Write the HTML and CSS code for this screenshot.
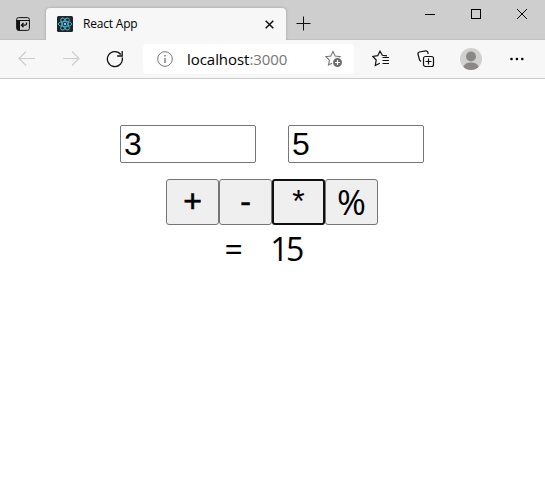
FILE: index.html
```html
<!DOCTYPE html>
<html lang="en">
<head>
<meta charset="utf-8">
<title>React App</title>
<link rel="stylesheet" href="styles.css">
</head>
<body>
<header class="tabstrip">
  <svg class="tab-actions" width="14" height="14" viewBox="0 0 14 14" fill="none" stroke="#111"><rect x=".6" y=".6" width="12.8" height="12.8" rx="2"/><path d="M.6 3.5h12.8"/><path d="M1 3.5h3v10H2L1 12z" fill="#111" stroke="none"/><path d="M10.500 5.500v1.200q0 1.500-1.500 1.500H5.500M7.500 6L5.500 8.200l2 2" stroke-width="1.300"/></svg>
  <div class="tab">
    <svg class="favicon" width="16" height="16" viewBox="0 0 16 16" fill="none" stroke="#4fb3ce" stroke-width=".9"><rect width="16" height="16" rx="1.500" fill="#20232a" stroke="none"/><ellipse cx="8" cy="8" rx="6.700" ry="2.600"/><ellipse cx="8" cy="8" rx="6.700" ry="2.600" transform="rotate(60 8 8)"/><ellipse cx="8" cy="8" rx="6.700" ry="2.600" transform="rotate(120 8 8)"/><circle cx="8" cy="8" r="1.200" fill="#61dafb" stroke="none"/></svg>
    <span class="tab-title">React App</span>
    <svg class="tab-close" width="9" height="9" viewBox="0 0 9 9" stroke="#111" stroke-width="1.500"><path d="M.7.7l7.600 7.600M8.300.7L.7 8.300"/></svg>
  </div>
  <svg class="new-tab" width="15" height="15" viewBox="0 0 15 15" stroke="#111"><path d="M7.500.5v14M.5 7.500h14"/></svg>
  <div class="window-controls">
    <svg width="12" height="12" viewBox="0 0 12 12" stroke="#000"><path d="M1 6.500h10"/></svg>
    <svg width="12" height="12" viewBox="0 0 12 12" fill="none" stroke="#000"><rect x="1.500" y="1.500" width="9" height="9"/></svg>
    <svg width="12" height="12" viewBox="0 0 12 12" stroke="#000"><path d="M1 1l10 10M11 1L1 11"/></svg>
  </div>
</header>
<nav class="toolbar">
  <svg class="back" width="18" height="16" viewBox="0 0 18 16" fill="none" stroke="#ccc" stroke-width="1.100"><path d="M17 7.500H1.500M8 .5l-7 7 7 7"/></svg>
  <svg class="forward" width="18" height="16" viewBox="0 0 18 16" fill="none" stroke="#ccc" stroke-width="1.100"><path d="M1 7.500h15.500M10 .5l7 7-7 7"/></svg>
  <svg class="reload" width="18" height="18" viewBox="0 0 18 18" fill="none" stroke="#111" stroke-width="1.300"><path d="M16.200 7.500A7.500 7.500 0 1 1 14.800 4.500M16.200 1v5h-5"/></svg>
  <div class="address">
    <svg class="info" width="16" height="16" viewBox="0 0 16 16" fill="none" stroke="#777"><circle cx="8" cy="8" r="7.300"/><path d="M8 7v5M8 4v1.500" stroke-width="1.400"/></svg>
    <span class="url">localhost<span class="port">:3000</span></span>
    <svg class="star" width="18" height="18" viewBox="0 0 18 18" fill="none" stroke="#777" stroke-width="1.100"><path d="M8 1.500l2.100 4.600 5 .6-3.700 3.400 1 5L8 12.700l-4.500 2.400.9-5L.8 6.700l5-.6z"/><circle cx="12.500" cy="12.500" r="5" fill="#6c6c6c" stroke="#fff"/><path d="M10 12.500h5M12.500 10v5" stroke="#fff" stroke-width="1.200"/></svg>
  </div>
  <svg class="favorites" width="18" height="18" viewBox="0 0 18 18" fill="none" stroke="#111" stroke-width="1.200"><path d="M15 5.800l-4.700-.5L8 1.200 5.700 5.700l-4.900.8L4.200 10l-.9 5.500 4.500-2.300M10.500 7.500h6.500M10.500 10.500h6.500M10.500 13.500h6.500"/></svg>
  <svg class="collections" width="18" height="18" viewBox="0 0 18 18" fill="none" stroke="#111" stroke-width="1.200"><path d="M4 11.500L2.500 10 1 4Q.7 2.500 2.300 2L8.700.8Q10.200.6 10.700 2l.5 2"/><rect x="6.500" y="6.500" width="10" height="10" rx="2" fill="#f7f7f7"/><path d="M8.500 11.500h6M11.500 8.500v6"/></svg>
  <svg class="profile" width="22" height="22" viewBox="0 0 22 22"><circle cx="11" cy="11" r="11" fill="#d2d0ce"/><circle cx="11" cy="8.500" r="5" fill="#8a8886"/><path d="M3.300 18.800Q5 14.500 11 14.500t7.700 4.300Q15.500 22 11 22t-7.700-3.200z" fill="#8a8886"/></svg>
  <svg class="more" width="14" height="4" viewBox="0 0 14 4" fill="#000"><circle cx="1.500" cy="2" r="1.300"/><circle cx="6.900" cy="2" r="1.300"/><circle cx="12.300" cy="2" r="1.300"/></svg>
</nav>
<main class="app">
  <div class="inputs"><input value="3" aria-label="First number"><input value="5" aria-label="Second number"></div>
  <div class="operators">
    <button class="heavy">+</button><button class="heavy">-</button><button class="active">*</button><button class="percent">%</button>
  </div>
  <div class="result"><span class="equals">=</span><span class="value">15</span></div>
</main>
</body>
</html>
```
FILE: styles.css
```css
* { box-sizing: border-box; }
html, body { height: 100%; }
body { margin: 0; overflow: hidden; background: #fff; color: #000; font-family: "Open Sans", sans-serif; }
svg { display: block; flex: none; }

.tabstrip { display: flex; height: 40px; background: #cecece; border-bottom: 1px solid #c1c1c1; }
.tab-actions { margin: 17px 0 0 16px; }
.tab { display: flex; align-items: center; width: 240px; height: 32px; margin: 8px 0 0 16px; padding: 0 12px 0 11px; background: #f7f7f7; border-radius: 4px 4px 0 0; box-shadow: 0 0 3px rgba(0, 0, 0, .25); clip-path: inset(-4px -4px 0 -4px); }
.tab-title { margin-left: 10px; font-size: 12px; line-height: 16px; letter-spacing: -.2px; }
.tab-close { margin-left: auto; }
.new-tab { margin: 16px 0 0 10px; }
.window-controls { display: flex; gap: 34px; margin: 8px 17px 0 auto; }

.toolbar { display: flex; align-items: center; height: 39px; background: #f7f7f7; border-bottom: 1px solid #ccc; }
.back { margin-left: 18px; }
.forward { margin-left: 26px; }
.reload { margin-left: 26px; }
.address { display: flex; align-items: center; width: 211px; height: 30px; margin-left: 19px; padding: 0 11px 0 14px; background: #fff; border-radius: 4px; }
.url { margin-left: 14px; font-size: 15px; line-height: 20px; letter-spacing: -.05px; }
.port { color: #767676; }
.star { margin-left: auto; }
.favorites { margin-left: 18px; }
.collections { margin-left: 27px; }
.profile { margin-left: 25px; }
.more { margin-left: 28px; }

.app { display: flex; flex-direction: column; align-items: center; padding: 46px 1px 0 0; }
.inputs { display: flex; gap: 32px; }
input { width: 136px; height: 38px; padding: 1px 3px; border: 1px solid #767676; border-radius: 2px; font: 32px "Liberation Sans", sans-serif; }
.operators { display: flex; margin-top: 16px; }
button { width: 53px; height: 46px; padding: 0 0 2px; background: #efefef; border: 1px solid #767676; border-radius: 3px; color: #000; font: 32px/40px "Liberation Sans", sans-serif; }
.heavy { -webkit-text-stroke: .6px #000; }
.percent { padding: 0; font: 35px/40px "Open Sans", sans-serif; }
button.active { border: 2px solid #101010; }
.result { display: flex; gap: 30px; width: 95px; height: 48px; font: 32px/48px "Open Sans", sans-serif; letter-spacing: -2.500px; }
```
